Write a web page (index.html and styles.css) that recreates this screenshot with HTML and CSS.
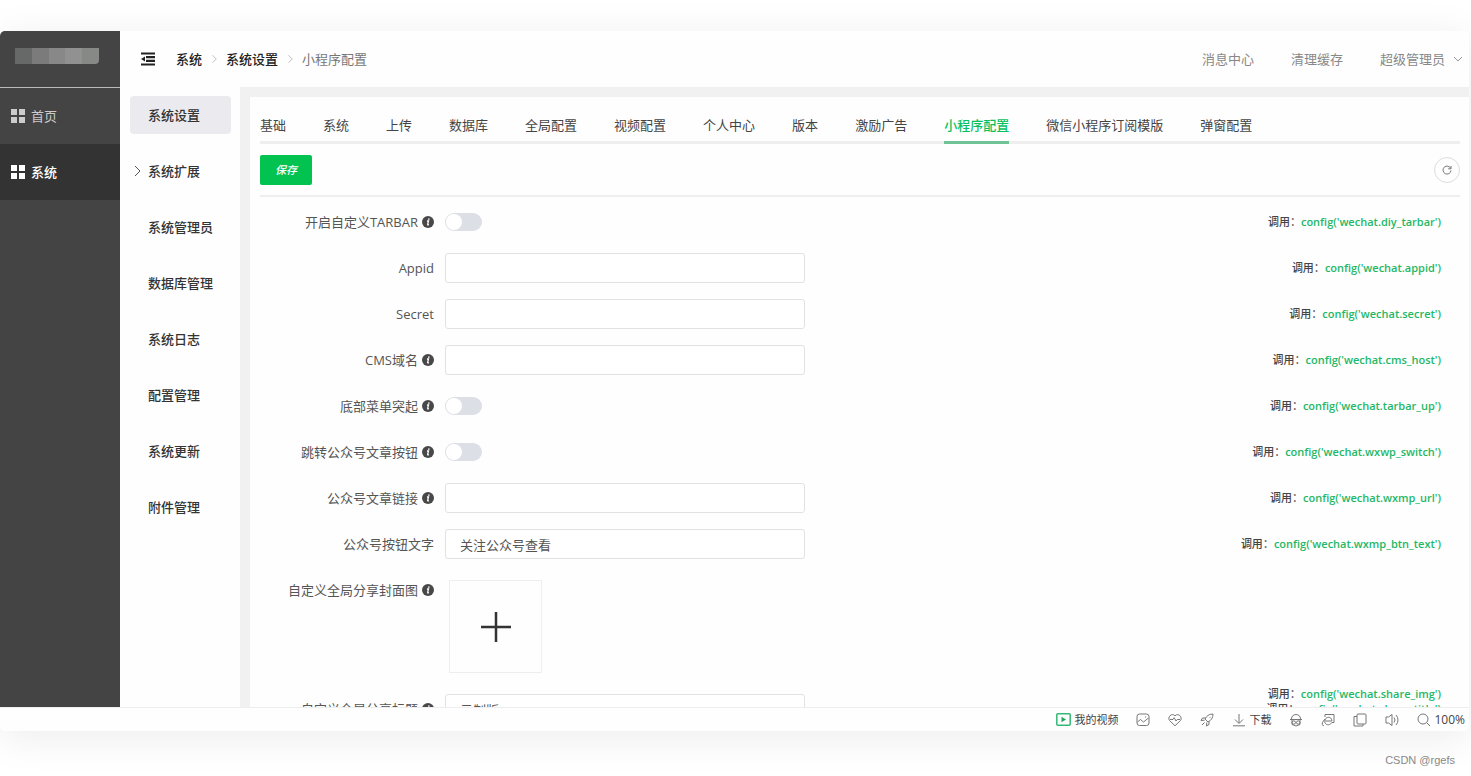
FILE: index.html
```html
<!DOCTYPE html>
<html lang="zh-CN">
<head>
<meta charset="utf-8">
<title>小程序配置</title>
<link rel="stylesheet" href="styles.css">
</head>
<body>
<svg class="sprite" aria-hidden="true">
  <symbol id="grid" viewBox="0 0 14 14"><path d="M0 0h6v6H0zM8 0h6v6H8zM0 8h6v6H0zM8 8h6v6H8z" fill="currentColor"/></symbol>
  <symbol id="chev" viewBox="0 0 8 12"><path d="M2 1l5 5-5 5" fill="none" stroke="currentColor"/></symbol>
  <symbol id="info" viewBox="0 0 12 12"><circle cx="6" cy="6" r="6" fill="#484848"/><path d="M7 2.4l-.3 1.5M5 5h1.500l-.9 3.500q0 .8 1.300.2" fill="none" stroke="#fff" stroke-width="1.300"/></symbol>
</svg>
<div class="window">
  <div class="app">
    <aside class="side">
      <div class="logo"><div class="mosaic"><i class="m1"></i><i class="m2"></i><i class="m3"></i><i class="m4"></i><i class="m5"></i></div></div>
      <nav>
        <a class="side-item" href="#"><svg class="i14"><use href="#grid"/></svg>首页</a>
        <a class="side-item on" href="#"><svg class="i14"><use href="#grid"/></svg>系统</a>
      </nav>
    </aside>
    <div class="right">
      <header class="top">
        <button class="fold" aria-label="折叠菜单"><svg width="14" height="14" viewBox="0 0 14 14"><path d="M0 1.500h14M5 5.200h9M5 8.800h9M0 12.500h14" stroke="#222" stroke-width="2.200"/><path d="M0 7l4-2.500v5z" fill="#222"/></svg></button>
        <div class="crumbs"><a href="#">系统</a><svg class="sep"><use href="#chev"/></svg><a href="#">系统设置</a><svg class="sep"><use href="#chev"/></svg><span>小程序配置</span></div>
        <div class="user"><a href="#">消息中心</a><a href="#">清理缓存</a><button class="admin">超级管理员<svg width="10" height="6" viewBox="0 0 10 6"><path d="M1 1l4 4 4-4" fill="none" stroke="#999"/></svg></button></div>
      </header>
      <div class="body">
        <nav class="sub">
          <a class="on" href="#">系统设置</a>
          <a href="#"><svg class="arrow"><use href="#chev"/></svg>系统扩展</a>
          <a href="#">系统管理员</a>
          <a href="#">数据库管理</a>
          <a href="#">系统日志</a>
          <a href="#">配置管理</a>
          <a href="#">系统更新</a>
          <a href="#">附件管理</a>
        </nav>
        <main class="panel">
          <div class="tabs">
            <a href="#">基础</a><a href="#">系统</a><a href="#">上传</a><a href="#">数据库</a><a href="#">全局配置</a><a href="#">视频配置</a><a href="#">个人中心</a><a href="#">版本</a><a href="#">激励广告</a><a class="on" href="#">小程序配置</a><a href="#">微信小程序订阅模版</a><a href="#">弹窗配置</a>
          </div>
          <div class="tools">
            <button class="save">保存</button>
            <button class="refresh" aria-label="刷新"><svg width="10" height="10" viewBox="0 0 10 10"><path d="M8.700 3.500A4 4 0 1 0 9 5.500M9 1v2.800H6.200" fill="none" stroke="#777"/></svg></button>
          </div>
          <form class="form">
            <div class="row"><label for="f1">开启自定义TARBAR<svg class="tip"><use href="#info"/></svg></label><input class="switch" type="checkbox" id="f1"><p class="code">调用：<code>config('wechat.diy_tarbar')</code></p></div>
            <div class="row"><label for="f2">Appid</label><input class="text" type="text" id="f2"><p class="code">调用：<code>config('wechat.appid')</code></p></div>
            <div class="row"><label for="f3">Secret</label><input class="text" type="text" id="f3"><p class="code">调用：<code>config('wechat.secret')</code></p></div>
            <div class="row"><label for="f4">CMS域名<svg class="tip"><use href="#info"/></svg></label><input class="text" type="text" id="f4"><p class="code">调用：<code>config('wechat.cms_host')</code></p></div>
            <div class="row"><label for="f5">底部菜单突起<svg class="tip"><use href="#info"/></svg></label><input class="switch" type="checkbox" id="f5"><p class="code">调用：<code>config('wechat.tarbar_up')</code></p></div>
            <div class="row"><label for="f6">跳转公众号文章按钮<svg class="tip"><use href="#info"/></svg></label><input class="switch" type="checkbox" id="f6"><p class="code">调用：<code>config('wechat.wxwp_switch')</code></p></div>
            <div class="row"><label for="f7">公众号文章链接<svg class="tip"><use href="#info"/></svg></label><input class="text" type="text" id="f7"><p class="code">调用：<code>config('wechat.wxmp_url')</code></p></div>
            <div class="row"><label for="f8">公众号按钮文字</label><input class="text" type="text" id="f8" value="关注公众号查看"><p class="code">调用：<code>config('wechat.wxmp_btn_text')</code></p></div>
            <div class="row tall"><label for="f9">自定义全局分享封面图<svg class="tip"><use href="#info"/></svg></label><button class="upload" type="button" id="f9" aria-label="上传图片"><svg width="30" height="30" viewBox="0 0 30 30"><path d="M15 0v30M0 15h30" stroke="#333" stroke-width="2.500"/></svg></button><p class="code">调用：<code>config('wechat.share_img')</code></p></div>
            <div class="row last"><label for="f10">自定义全局分享标题<svg class="tip"><use href="#info"/></svg></label><input class="text" type="text" id="f10" value="云制版"><p class="code">调用：<code>config('wechat.share_title')</code></p></div>
          </form>
        </main>
      </div>
    </div>
  </div>
  <footer class="status">
    <button><svg width="15" height="13" viewBox="0 0 15 13"><rect x=".8" y=".8" width="13.400" height="11.400" rx="1" fill="none" stroke="#35b777" stroke-width="1.500"/><path d="M5.500 3.800v5.400l4.500-2.700z" fill="#1fa862"/></svg>我的视频</button>
    <button aria-label="截图"><svg class="ic" viewBox="0 0 14 14"><rect x="1" y="1" width="12" height="11.500" rx="2.500"/><path d="M1.500 9l3-2.500 3 2.500 5-4M4 12.500h6M9 4h1"/></svg></button>
    <button aria-label="健康"><svg class="ic" viewBox="0 0 14 14"><path d="M7 12.800L1.500 7.500C-.8 4.500 3.500-.8 7 2.800 10.500-.8 14.800 4.500 12.500 7.500zM2 6.500h3l1.200-1.800L8 8l1.200-1.500H12"/></svg></button>
    <button aria-label="加速"><svg class="ic" viewBox="0 0 14 14"><path d="M13 1C9 1 6.500 3 5 6l3 3c3-1.500 5-4 5-8zM5.500 5H2.500L1 7.500l3.500-.3M9 8.500v3L6.500 13l.3-3.500M4.500 9.500L2 12M9.500 4l.8.8"/></svg></button>
    <button><svg class="ic" viewBox="0 0 14 14"><path d="M7 1v9M3 6.500l4 4 4-4M1 12.800h12"/></svg>下载</button>
    <button aria-label="隐私"><svg class="ic" viewBox="0 0 14 14"><path d="M2.500 6C2.500 0 11.500 0 11.500 6M1 6.500h12M3 6.500v5q4 3 8 0v-5"/><circle cx="4.800" cy="9.500" r="1.700"/><circle cx="9.200" cy="9.500" r="1.700"/></svg></button>
    <button aria-label="内核"><svg class="ic" viewBox="0 0 14 14"><path d="M4 4V1.500h9v8h-2.500M4.500 8h6.300c.3-5-6.800-5-7 .2-.2 4.200 5.200 4.600 6.500 1.800M4 6C.5 9.500.5 13 3 12.500"/></svg></button>
    <button aria-label="窗口"><svg class="ic" viewBox="0 0 14 14"><rect x="4" y="1" width="9" height="10" rx="1"/><path d="M4 3.500H1V13h9v-2"/></svg></button>
    <button aria-label="声音"><svg class="ic" viewBox="0 0 14 14"><path d="M7 1.500L3.500 4H1v6h2.500L7 12.500zM9 4.500q2 2.500 0 5M11 2q4 5 0 10"/></svg></button>
    <button class="zoom"><svg class="ic" viewBox="0 0 14 14"><circle cx="6" cy="6" r="5"/><path d="M9.700 9.700L13 13"/></svg>100%</button>
  </footer>
</div>
<p class="mark">CSDN @rgefs</p>
</body>
</html>
```
FILE: styles.css
```css
* { box-sizing: border-box; }
body {
  margin: 0; height: 100vh; overflow: hidden; padding: 31px 2px 0 0;
  display: flex; flex-direction: column; background: #fff;
  font: 13px/20px "Open Sans", "Noto Sans CJK SC", sans-serif; color: #444;
}
a { color: inherit; text-decoration: none; }
button { border: 0; background: none; padding: 0; font: inherit; color: inherit; display: flex; align-items: center; }
p { margin: 0; }
svg { flex: none; }
.sprite { display: none; }
.window {
  flex: 1; min-height: 0; display: flex; flex-direction: column; overflow: hidden;
  background: #fefefe; border-radius: 5px; box-shadow: 0 6px 40px rgba(0,0,0,.08);
}
.app { flex: 1; min-height: 0; display: flex; overflow: hidden; }
.side { width: 120px; flex: none; background: #444; color: #ccc; }
.logo { height: 57px; border-bottom: 1px solid #bbb; padding: 17px 15px; }
.mosaic { display: flex; height: 16px; width: 84px; }
.mosaic i { flex: 1; }
.m1 { background: #666968; }
.m2 { background: #7b7b7b; }
.m3 { background: #888; }
.m4 { background: #919191; }
.m5 { background: #868985; border-radius: 0 0 4px 0; }
.side-item { display: flex; align-items: center; gap: 6px; height: 56px; padding-left: 11px; }
.side-item.on { background: #333; color: #fff; font-weight: 500; }
.i14 { width: 14px; height: 14px; }
.right { flex: 1; min-width: 0; display: flex; flex-direction: column; }
.top { height: 56px; flex: none; display: flex; align-items: center; padding: 0 6px 0 21px; }
.fold { margin-right: 21px; }
.crumbs { display: flex; align-items: center; font-weight: 500; color: #222; }
.crumbs span { font-weight: 400; color: #777; }
.sep { width: 6px; height: 10px; margin: 0 9px; color: #aaa; }
.user { margin-left: auto; display: flex; gap: 37px; color: #888; }
.admin { gap: 8px; }
.body { flex: 1; min-height: 0; display: flex; background: #f1f1f1; }
.sub { width: 120px; flex: none; background: #fefefe; padding: 9px 9px 0 10px; display: flex; flex-direction: column; gap: 18px; color: #333; font-weight: 500; }
.sub a { display: flex; align-items: center; height: 38px; padding-left: 18px; border-radius: 4px; position: relative; }
.sub .on { background: #ebebef; }
.arrow { position: absolute; left: 3px; width: 8px; height: 12px; color: #555; }
.panel { flex: 1; min-width: 0; margin: 10px 0 0 10px; padding: 0 9px 0 10px; background: #fefefe; overflow: hidden; }
.tabs { display: flex; gap: 37px; height: 47px; padding-top: 18px; border-bottom: 3px solid #eee; white-space: nowrap; }
.tabs .on { color: #07c160; font-weight: 500; height: 29px; border-bottom: 3px solid #6ec496; }
.tools { display: flex; align-items: center; justify-content: space-between; height: 53px; border-bottom: 2px solid #eee; }
.save { height: 30px; width: 52px; justify-content: center; border-radius: 2px; background: #02c250; color: #fff; font-size: 11px; font-weight: 500; font-style: italic; }
.refresh { width: 26px; height: 26px; justify-content: center; border: 1px solid #ddd; border-radius: 50%; }
.form { padding: 10px 19px 0 0; display: flex; flex-direction: column; gap: 16px; }
.row { display: flex; align-items: center; min-height: 30px; gap: 11px; }
.row label { width: 174px; display: flex; align-items: center; justify-content: flex-end; gap: 4px; white-space: nowrap; color: #555; }
.tip { width: 12px; height: 12px; }
.text { width: 360px; height: 30px; margin: 0; border: 1px solid #e2e2e2; border-radius: 3px; padding: 0 14px; background: #fff; font: inherit; color: #555; }
.switch { appearance: none; margin: 0; width: 37px; height: 18px; border-radius: 9px; background: #dcdfe6; padding: 1px; }
.switch::before { content: ""; display: block; width: 16px; height: 16px; border-radius: 50%; background: #fff; }
.switch:checked { background: #07c160; }
.switch:checked::before { margin-left: auto; }
.code { margin-left: auto; font-size: 11px; white-space: nowrap; color: #444; font-weight: 500; }
.code code { font: inherit; color: #1fb866; font-weight: 600; }
.tall { align-items: flex-start; padding: 5px 0; }
.tall .upload { width: 93px; height: 93px; margin-left: 4px; border: 1px solid #eee; justify-content: center; }
.tall .code { align-self: flex-end; margin-bottom: -31px; }
.status { height: 24px; flex: none; display: flex; align-items: center; justify-content: flex-end; gap: 18px; padding-right: 4px; border-top: 1px solid #eee; font-size: 11px; }
.status button { gap: 3px; }
.status .zoom { font-size: 12px; }
.ic { width: 14px; height: 14px; fill: none; stroke: #777; }
.mark { height: 45px; flex: none; padding: 20px 14px 0 0; text-align: right; font-family: "Liberation Sans", sans-serif; font-size: 11px; line-height: 18px; color: #888; }
```
